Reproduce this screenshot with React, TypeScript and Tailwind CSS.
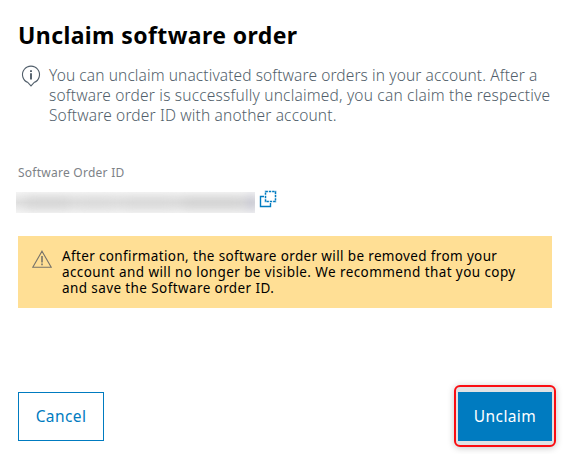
import React from 'react';

const orderInfo = [
  { text: 'You can unclaim unactivated software orders in your account. After a', tracking: 'tracking-[0.1px]' },
  { text: 'software order is successfully unclaimed, you can claim the respective', tracking: 'tracking-[0.19px]' },
  { text: 'Software order ID with another account.', tracking: 'tracking-[0.15px]' },
];

const warning = [
  { text: 'After confirmation, the software order will be removed from your', tracking: 'tracking-[0.36px]' },
  { text: 'account and will no longer be visible. We recommend that you copy', tracking: 'tracking-[0.41px]' },
  { text: 'and save the Software order ID.', tracking: 'tracking-[0.4px]' },
];

const InfoIcon: React.FC = () => (
  <svg className="w-5 h-[22px] shrink-0" viewBox="0 0 20 22" fill="none" stroke="#525f6b">
    <path d="M7 17.6 A8.5 8.5 0 1 1 13 17.6 L10 20.9 Z" strokeWidth="1.1" />
    <path d="M10 8.3 V14.6" strokeWidth="1.9" />
    <path d="M10 5.2 V7" strokeWidth="1.9" />
  </svg>
);

const WarningIcon: React.FC = () => (
  <svg className="w-5 h-[18px] shrink-0" viewBox="0 0 20 18" fill="none" stroke="#77736a">
    <path d="M10 1.2 L19.2 17.3 H0.8 Z" strokeWidth="1.1" />
    <path d="M10 6 V12.4" strokeWidth="1.6" />
    <path d="M10 13.6 V15.2" strokeWidth="1.6" />
  </svg>
);

const CopyIcon: React.FC = () => (
  <svg className="w-[18px] h-[18px]" viewBox="0 0 18 18" fill="none" stroke="#007bc0">
    <path d="M5 6.5 H1.5 V16.5 H11.5 V13" strokeWidth="1.4" />
    <path d="M6.5 1.5 H16.5 V11.5 H6.5 Z" strokeWidth="1.5" strokeDasharray="2.4 0.93" />
  </svg>
);

const App: React.FC = () => {
  return (
    <div className="w-[568px] h-[454px] bg-white overflow-hidden px-[18px] pt-[19px] font-['Noto_Sans','Open_Sans',sans-serif]">
      <h1 className="h-8 text-[23px] leading-[32px] font-bold text-black whitespace-nowrap tracking-[0.4px]">
        <span>Unclaim software order</span>
      </h1>

      <div className="flex mt-[14px] pl-[3px]">
        <InfoIcon />
        <p className="ml-2 text-[15.5px] leading-5 font-light text-[#525f6b]">
          {orderInfo.map((line) => (
            <span key={line.text} className={`block w-fit whitespace-nowrap ${line.tracking}`}>
              {line.text}
            </span>
          ))}
        </p>
      </div>

      <div className="mt-[38px] h-5 text-[12px] leading-5 text-[#7d8287] tracking-[0.25px]">
        <span>Software Order ID</span>
      </div>

      {/* Redacted order id */}
      <div className="flex mt-[5px] -ml-0.5">
        <div className="mt-1 w-[239px] h-[21px] overflow-hidden bg-linear-to-b from-[#f5f5f5] via-[#e0e0e0] to-[#f5f5f5]">
          <div className="flex items-center h-full gap-1 px-2 blur-[6px]">
            <div className="w-12 h-2 bg-[#d0d0d0]" />
            <div className="w-10 h-2 bg-[#d8d8d8]" />
            <div className="w-14 h-2 bg-[#d6d6d6]" />
            <div className="grow h-2 bg-[#cccccc]" />
            <div className="-mr-2 w-1.5 h-4 bg-[#b4b4ca]" />
          </div>
        </div>
        <button className="ml-1 mt-0.5 h-[18px]">
          <CopyIcon />
        </button>
      </div>

      <div className="flex mt-[23px] w-[534px] h-[72px] bg-[#ffdf95] pt-3 pl-3.5">
        <div className="mt-0.5">
          <WarningIcon />
        </div>
        <p className="ml-2.5 text-[13.5px] leading-4 text-black">
          {warning.map((line) => (
            <span key={line.text} className={`block w-fit whitespace-nowrap ${line.tracking}`}>
              {line.text}
            </span>
          ))}
        </p>
      </div>

      <div className="flex justify-between items-start mt-[77px] w-[538px] text-[15.5px] tracking-[0.4px]">
        <button className="mt-[7px] w-[86px] h-[49px] border border-[#007bc0] text-[#007bc0]">
          <span>Cancel</span>
        </button>
        <div className="w-[102px] h-[62px] rounded-md border-2 border-[#fb0d12] bg-[#e0e2e4] pt-[5px] pl-0.5 shadow-[0_1px_7px_rgba(0,0,0,0.22)]">
          <button className="w-[94px] h-[49px] bg-[#007bc0] text-white">
            <span>Unclaim</span>
          </button>
        </div>
      </div>
    </div>
  );
};

export default App;
